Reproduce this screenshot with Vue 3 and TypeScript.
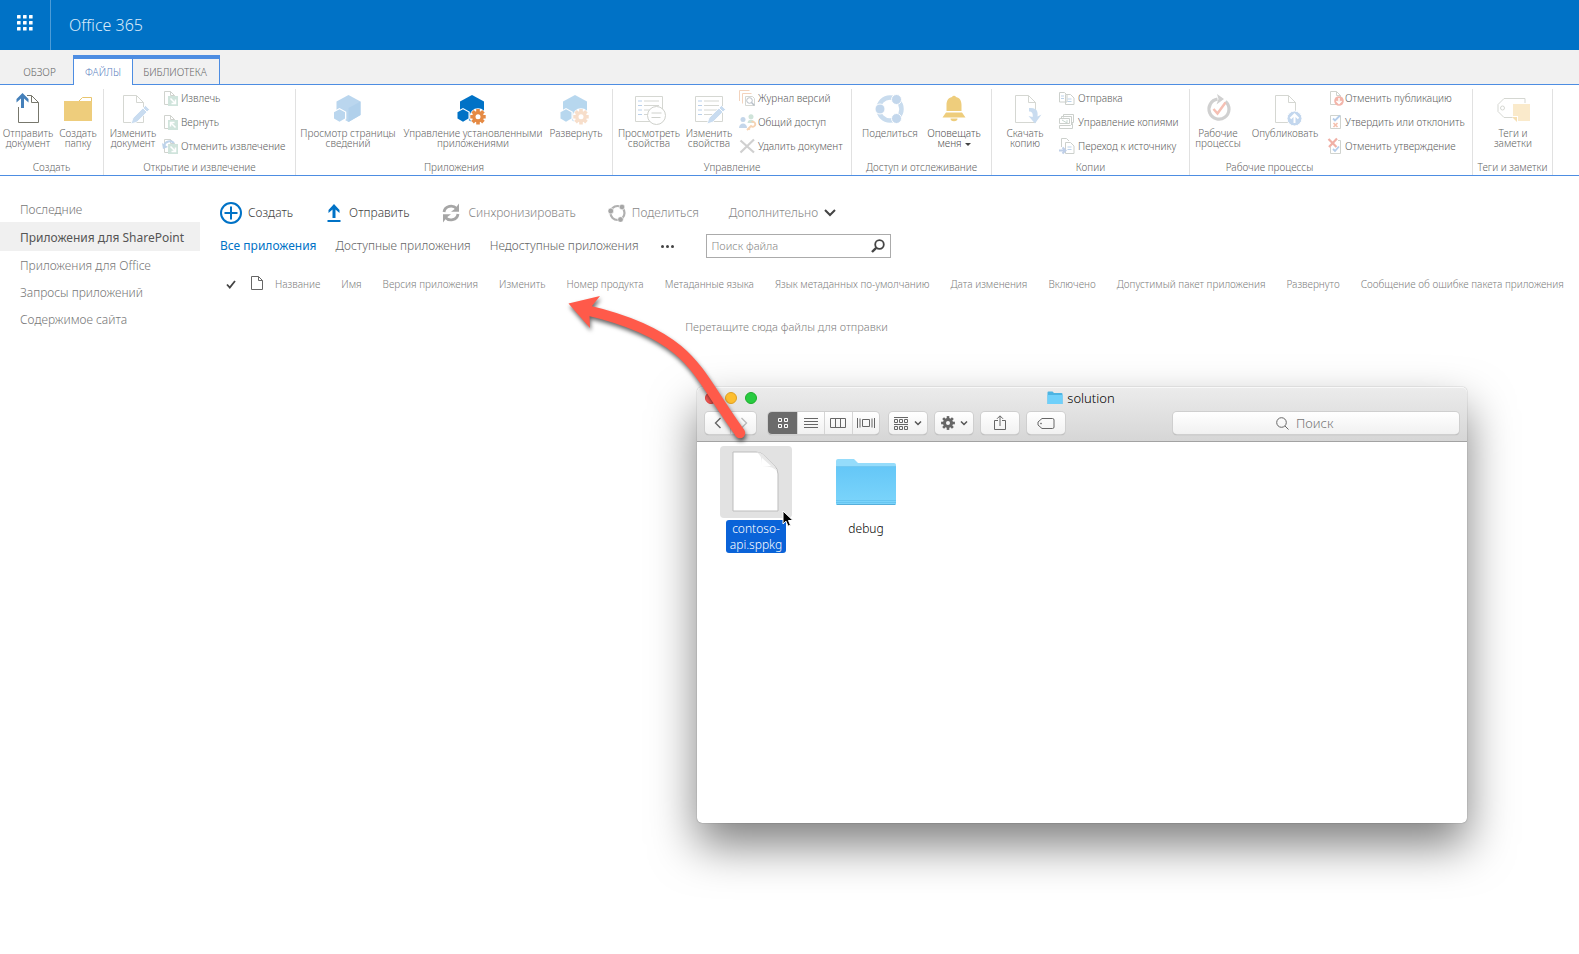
<script setup lang="ts">
import { ref } from 'vue'

interface LargeAction { icon: string; lines: string[]; strong?: boolean; menu?: boolean }
interface SmallAction { icon: string; label: string }
interface RibbonGroup { id: string; label: string; large: LargeAction[]; small?: SmallAction[] }

const doc = (stroke: string) => `<path d="M6.5 2.5h13l7 7v20h-20z M19.5 2.5v7h7" fill="none" stroke="${stroke}"/>`
const pencil = '<path d="M14 31l2-6L28.500 12.500l4 4L20 29z" fill="#c9dcf0" stroke="#fff" stroke-width=".8"/><path d="M26 15l4 4" stroke="#fff"/>'
const gear = '<g fill="#e58a44"><circle cx="21" cy="23.700" r="5.800"/><path d="M19.200 16h3.600v15.400h-3.600zM13.300 21.900h15.400v3.600H13.300z"/><path d="M19.200 16h3.600v15.400h-3.600zM13.300 21.900h15.400v3.600H13.300z" transform="rotate(45 21 23.700)"/></g><circle cx="21" cy="23.700" r="2.500" fill="#fff"/>'
const hexes = (fill: string) => `<path d="M15 2l12 6.500v13.500L15 29 3 22V8.500z" fill="${fill}"/><path d="M6 15l6.800 3.800v7.500L6 30.200l-6.800-3.900v-7.500z" fill="#fff"/><path d="M6 16.200l5.500 3.100v6.300L6 28.700.5 25.600v-6.300z" fill="${fill}"/>`
const propList = '<path d="M2.500 3.500h27v25h-27z" fill="none" stroke="#d5d7d2"/><path d="M5 8h4M5 12.500h4M5 17h4M5 21.500h4" stroke="#b9d0ec"/><path d="M11 8h15M11 12.500h15M11 17h15M11 21.500h13" stroke="#d5d7d2"/>'
const miniDoc = '<path d="M2.500 1.500h6l4 4v9h-10zM8.500 1.500v4h4" fill="none" stroke="#d0d3ce"/>'

const icons: Record<string, string> = {
  upload: '<path d="M15 2.500h4.500l7 7v20h-20V14M19.500 2.500v7h7" fill="none" stroke="#77776c"/><path d="M10.500 0l6 6v3.500l-4.500-4V15H9V5.500L4.500 9.500V6z" fill="#4580ba"/>',
  folder: '<path d="M2.500 8.500h14l4-4h9v4" fill="#fff" stroke="#e8c56e"/><path d="M2 8h28v20H2z" fill="#eecd7c"/>',
  editDoc: doc('#d5d7d2') + pencil,
  viewProps: propList + '<circle cx="23.500" cy="22.500" r="9" fill="#fff" stroke="#cfd1cc"/><path d="M18.500 20h10M18.500 24.500h9" stroke="#cfd1cc"/>',
  editProps: propList + pencil,
  apps: '<path d="M16.500 2l12 6.500v13.500l-12 7-12-7V8.500z" fill="#bad6ee"/><path d="M16.500 15v14l12-7V8.500z" fill="#b0d0eb"/><path d="M7.500 15l6.800 3.800v7.500l-6.800 3.900-6.800-3.900v-7.500z" fill="#fff"/><path d="M7.500 16.200l5.500 3.100v6.300l-5.500 3.100L2 25.600v-6.300z" fill="#bad6ee"/>',
  manageApps: hexes('#0072c6') + '<circle cx="21" cy="23.700" r="8.500" fill="#fff"/>' + gear,
  deploy: '<g opacity=".28">' + hexes('#0072c6') + '<circle cx="21" cy="23.700" r="8.500" fill="#fff"/>' + gear + '</g>',
  share: '<circle cx="16" cy="16" r="11.500" fill="none" stroke="#c9dcee" stroke-width="4.500"/><g fill="#c3d7ec" stroke="#fff" stroke-width="1"><circle cx="6" cy="16" r="5"/><circle cx="22.500" cy="6.500" r="5"/><circle cx="22.500" cy="25.500" r="5"/></g>',
  bell: '<path d="M14 4a2.200 2.200 0 0 1 4 0c4 .8 5.500 4 5.500 8v6H8.500v-6c0-4 1.500-7.200 5.500-8zM8 19.500h16l3.500 5h-23zM12.500 25.500h7a3.500 2.800 0 0 1-7 0z" fill="#eecd7c"/>',
  download: doc('#d5d7d2') + '<path d="M20 15c9-1 9 5 8.500 8.500l4-2-6.500 9-6.500-7.500 4.200 1c.5-4-1-5.500-3.700-5.500z" fill="#c9dcf0"/>',
  workflow: '<path d="M23.500 8.500a10 10 0 1 1-8-2.300" fill="none" stroke="#d0d0d0" stroke-width="3.200"/><path d="M15 1l7 5-7.500 5.500 2-5.500z" fill="#d0d0d0"/><path d="M11.500 16l4 4.500 8-11" fill="none" stroke="#f5c0b4" stroke-width="2.500"/>',
  publish: doc('#d5d7d2') + '<circle cx="25.500" cy="25.500" r="7.500" fill="#c3d7ee" stroke="#fff"/><path d="M25.500 30v-8M21.500 25.500l4-4 4 4" fill="none" stroke="#fff" stroke-width="2"/>',
  tags: '<path d="M7 5.500h21v19H7l-6-6v-7z" fill="none" stroke="#d5d7d2"/><circle cx="5.500" cy="15" r="2" fill="none" stroke="#d5d7d2"/><path d="M15 10h18v18H19l-4-4z" fill="#fff"/><path d="M16 11h17v17H21v-5h-5z" fill="#faeacb"/><path d="M15 24h5v5z" fill="#f6dfb2"/>',
  checkOut: miniDoc + '<path d="M6 6h10v10H6z" fill="#d0e4dc"/><path d="M8.500 8.500l5 5M13.500 9.500v4h-4" fill="none" stroke="#fff" stroke-width="1.500"/>',
  checkIn: miniDoc + '<path d="M6 6h10v10H6z" fill="#d0e4dc"/><path d="M13.500 13.500l-5-5M8.500 12.500v-4h4" fill="none" stroke="#fff" stroke-width="1.500"/>',
  discard: miniDoc + '<path d="M6 6h10v10H6z" fill="#d0e4dc"/><path d="M8.500 8.500l5 5M13.500 9.500v4h-4" fill="none" stroke="#fff" stroke-width="1.500"/><path d="M2 8c1-5 7-6 10-3" fill="none" stroke="#bdd3ea" stroke-width="2"/><path d="M0 5l1 6 5-2z" fill="#bdd3ea"/>',
  history: '<path d="M.5 11V.500h10M3.500 13.500v-10h9" fill="none" stroke="#f3d3bd"/><path d="M6.500 15.500v-9h7l2 2v7z" fill="#fff" stroke="#d5d7d2"/><circle cx="10.500" cy="10.500" r="2.800" fill="none" stroke="#b7bfc8"/><path d="M12.500 12.500l3 3" stroke="#b7bfc8" stroke-width="1.500"/>',
  people: '<g fill="#c4d6ea"><circle cx="4" cy="5.500" r="2.500"/><path d="M0 14c0-6 8-6 8 0z"/></g><g fill="#cfe3d9"><circle cx="12" cy="2.800" r="2.500"/><path d="M8.500 9c0-4.500 7-4.500 7 0z"/></g><path d="M12.500 8a2.500 2.500 0 1 1-.5 4l-4 4M9.500 14l1.500 1.500" fill="none" stroke="#f6d3b3" stroke-width="1.800"/>',
  remove: '<path d="M1.500 2.500L15 14.500M15 1.500L1.500 14.500" stroke="#d0d0d0" stroke-width="2.200"/>',
  send: '<path d="M.5 2.500h5l2.500 2.500v7h-7.500zM6.500 4.500h5l3.500 3.500v6.500h-8.500z" fill="#fff" stroke="#ccd0cc"/><path d="M2 6h3M2 8.500h3M8.500 9h4M8.500 11.500h4" stroke="#bdd3ea"/>',
  copies: '<path d="M4.500 3.500v-3h10v8h-2M2.500 5.500v-3h10v9" fill="none" stroke="#ccd0cc"/><path d="M.5 4.500h10v5h-10zM.5 11.500h11l2-2v5h-13z" fill="#fff" stroke="#ccd0cc"/><path d="M3 6l5 3M8 6v3" stroke="#c6d6cf"/>',
  source: '<path d="M2.500 9V.500h5l2.500 2.500M6.500 4.500h5l3.500 3.500v7.500h-8.500z" fill="#fff" stroke="#ccd0cc"/><path d="M8.500 9h4M8.500 11.500h4" stroke="#bdd3ea"/><path d="M0 12.500h6M3.500 9.500l3 3-3 3" fill="none" stroke="#bfcfe8" stroke-width="2"/>',
  unpublish: miniDoc + '<circle cx="11" cy="11" r="4.800" fill="#f3b5aa"/><path d="M11 8v5.500M8.500 11l2.500 2.500 2.500-2.500" fill="none" stroke="#fff" stroke-width="1.500"/>',
  approve: '<path d="M2.500 1.500h10v13h-10z" fill="none" stroke="#d0d3ce"/><path d="M5 4.500l2 2 5-5" fill="none" stroke="#b5cdea" stroke-width="1.800"/><path d="M5.500 9l4 4M9.500 9l-4 4" stroke="#f4c0ad" stroke-width="1.600"/>',
  unapprove: '<path d="M10 2.500h2.500v13h-10V9" fill="none" stroke="#d0d3ce"/><path d="M.5 1l8 8M9 .500l-8 8.500" stroke="#f0b0a6" stroke-width="2.200"/><path d="M5 11l2 2 4-4.500" fill="none" stroke="#b5cdea" stroke-width="1.800"/>',
}

const groups: RibbonGroup[] = [
  { id: 'create', label: 'Создать', large: [
    { icon: 'upload', lines: ['Отправить', 'документ'] }, { icon: 'folder', lines: ['Создать', 'папку'] }] },
  { id: 'checkout', label: 'Открытие и извлечение', large: [{ icon: 'editDoc', lines: ['Изменить', 'документ'] }],
    small: [{ icon: 'checkOut', label: 'Извлечь' }, { icon: 'checkIn', label: 'Вернуть' }, { icon: 'discard', label: 'Отменить извлечение' }] },
  { id: 'apps', label: 'Приложения', large: [
    { icon: 'apps', lines: ['Просмотр страницы', 'сведений'] },
    { icon: 'manageApps', lines: ['Управление установленными', 'приложениями'] },
    { icon: 'deploy', lines: ['Развернуть'] }] },
  { id: 'manage', label: 'Управление', large: [
    { icon: 'viewProps', lines: ['Просмотреть', 'свойства'] }, { icon: 'editProps', lines: ['Изменить', 'свойства'] }],
    small: [{ icon: 'history', label: 'Журнал версий' }, { icon: 'people', label: 'Общий доступ' }, { icon: 'remove', label: 'Удалить документ' }] },
  { id: 'access', label: 'Доступ и отслеживание', large: [
    { icon: 'share', lines: ['Поделиться'] }, { icon: 'bell', lines: ['Оповещать', 'меня'], strong: true, menu: true }] },
  { id: 'copies', label: 'Копии', large: [{ icon: 'download', lines: ['Скачать', 'копию'] }],
    small: [{ icon: 'send', label: 'Отправка' }, { icon: 'copies', label: 'Управление копиями' }, { icon: 'source', label: 'Переход к источнику' }] },
  { id: 'workflow', label: 'Рабочие процессы', large: [
    { icon: 'workflow', lines: ['Рабочие', 'процессы'] }, { icon: 'publish', lines: ['Опубликовать'] }],
    small: [{ icon: 'unpublish', label: 'Отменить публикацию' }, { icon: 'approve', label: 'Утвердить или отклонить' }, { icon: 'unapprove', label: 'Отменить утверждение' }] },
  { id: 'tags', label: 'Теги и заметки', large: [{ icon: 'tags', lines: ['Теги и', 'заметки'] }] },
]

const nav = ['Последние', 'Приложения для SharePoint', 'Приложения для Office', 'Запросы приложений', 'Содержимое сайта']
const activeNav = ref(1)
const columns = ['Название', 'Имя', 'Версия приложения', 'Изменить', 'Номер продукта', 'Метаданные языка', 'Язык метаданных по-умолчанию', 'Дата изменения', 'Включено', 'Допустимый пакет приложения', 'Развернуто', 'Сообщение об ошибке пакета приложения']
const query = ref('')
const finderQuery = ref('')
const dots = [0, 6, 12]
const gearAngles = [0, 45, 90, 135]
</script>

<template>
  <div class="page">
    <header class="suite-bar">
      <button class="launcher" aria-label="Приложения">
        <svg width="16" height="16" viewBox="0 0 16 16" fill="#fff">
          <template v-for="y in dots" :key="y"><rect v-for="x in dots" :key="x" :x="x" :y="y" width="3.600" height="3.600" rx=".5" /></template>
        </svg>
      </button>
      <a href="#" class="brand">Office 365</a>
    </header>

    <nav class="tabs" aria-label="Лента">
      <button class="tab">ОБЗОР</button>
      <div class="tab-set">
        <button class="tab active">ФАЙЛЫ</button>
        <button class="tab">БИБЛИОТЕКА</button>
      </div>
    </nav>

    <div class="ribbon">
      <section v-for="g in groups" :key="g.id" class="group" :class="g.id">
        <div class="group-body">
          <button v-for="b in g.large" :key="b.icon" class="large" :class="{ strong: b.strong }">
            <svg width="32" height="32" viewBox="0 0 32 32" overflow="visible" v-html="icons[b.icon]" />
            <span v-for="(line, i) in b.lines" :key="line">{{ line }}<i v-if="b.menu && i === b.lines.length - 1" class="caret" /></span>
          </button>
          <div v-if="g.small" class="small-stack">
            <button v-for="s in g.small" :key="s.icon" class="small">
              <svg width="16" height="16" viewBox="0 0 16 16" overflow="visible" v-html="icons[s.icon]" />{{ s.label }}
            </button>
          </div>
        </div>
        <h2 class="group-label">{{ g.label }}</h2>
      </section>
    </div>

    <div class="workspace">
      <nav class="sidebar" aria-label="Сайт">
        <a v-for="(item, i) in nav" :key="item" href="#" :class="{ active: i === activeNav }" @click.prevent="activeNav = i">{{ item }}</a>
      </nav>

      <main class="library">
        <div class="commands">
          <button class="command new">
            <svg width="22" height="22" viewBox="0 0 22 22" fill="none" stroke="#0072c6" stroke-width="2"><circle cx="11" cy="11" r="10" /><path d="M11 4.500v13M4.500 11h13" /></svg>
            Создать
          </button>
          <button class="command send">
            <svg width="14" height="20" viewBox="0 0 14 20"><path d="M7 1l5.500 6v3L8.500 6.500V15h-3V6.500L1.500 10V7zM.5 17h13v2H.5z" fill="#0072c6" /></svg>
            Отправить
          </button>
          <button class="command sync" disabled>
            <svg width="18" height="20" viewBox="0 0 18 20" fill="none" stroke="#a6a6a6" stroke-width="2.800"><path d="M2 9c1-6.500 9-7.500 12.500-3.500M16 11c-1 6.500-9 7.500-12.500 3.500" /><path d="M17 .500v8.300H9l4-3zM1 19.500v-8.300h8l-4 3z" fill="#a6a6a6" stroke="none" /></svg>
            Синхронизировать
          </button>
          <button class="command share" disabled>
            <svg width="18" height="18" viewBox="0 0 18 18"><circle cx="9.500" cy="9" r="7" fill="none" stroke="#b0b0b0" stroke-width="2.200" /><g fill="#a6a6a6" stroke="#fff" stroke-width=".6"><circle cx="2.800" cy="7" r="2.900" /><circle cx="14" cy="3" r="2.800" /><circle cx="12.500" cy="15.500" r="2.800" /></g></svg>
            Поделиться
          </button>
          <button class="command more" disabled>
            Дополнительно
            <svg width="12" height="8" viewBox="0 0 12 8"><path d="M1 1l5 5 5-5" fill="none" stroke="#444" stroke-width="2" /></svg>
          </button>
        </div>

        <div class="views">
          <a href="#" class="current">Все приложения</a>
          <a href="#">Доступные приложения</a>
          <a href="#">Недоступные приложения</a>
          <button class="dots" aria-label="Другие представления"><i /><i /><i /></button>
          <label class="search">
            <input v-model="query" type="text" placeholder="Поиск файла" aria-label="Поиск файла" />
            <svg width="14" height="14" viewBox="0 0 14 14" fill="none" stroke="#444"><circle cx="8.500" cy="5.500" r="4.300" stroke-width="1.800" /><path d="M5.200 8.800L1 13" stroke-width="2.400" /></svg>
          </label>
        </div>

        <table class="items">
          <thead>
            <tr>
              <th class="mark"><svg width="10" height="9" viewBox="0 0 10 9"><path d="M1 4.500l2.800 3L9 1" fill="none" stroke="#444" stroke-width="1.800" /></svg></th>
              <th class="type"><svg width="12" height="14" viewBox="0 0 12 14"><path d="M.5.500h7l4 4v9H.5zM7.500.500v4h4" fill="none" stroke="#666" /></svg></th>
              <th v-for="c in columns" :key="c" scope="col">{{ c }}</th>
            </tr>
          </thead>
        </table>
        <p class="drop-hint">Перетащите сюда файлы для отправки</p>
      </main>
    </div>

    <section class="finder" aria-label="solution">
      <header class="finder-head">
        <div class="title-row">
          <div class="lights"><button class="close" aria-label="Закрыть" /><button class="minimize" aria-label="Свернуть" /><button class="zoom" aria-label="Развернуть" /></div>
          <h1>
            <svg width="16" height="14" viewBox="0 0 16 14"><path d="M.5 1.500q0-1 1-1h4l1.500 1.500h7.500q1 0 1 1v10H.5z" fill="#4db4e2" /><path d="M.5 4h15v9H.5z" fill="#6fd0fa" /></svg>
            solution
          </h1>
        </div>
        <div class="tool-row">
          <div class="buttons history">
            <button aria-label="Назад"><svg width="8" height="12" viewBox="0 0 8 12"><path d="M6.500 1L1.500 6l5 5" fill="none" stroke="#666" stroke-width="1.400" /></svg></button>
            <button aria-label="Вперёд"><svg width="8" height="12" viewBox="0 0 8 12"><path d="M1.500 1l5 5-5 5" fill="none" stroke="#bbb" stroke-width="1.400" /></svg></button>
          </div>
          <div class="buttons modes">
            <button class="on" aria-label="Значки"><svg width="12" height="12" viewBox="0 0 12 12" fill="none" stroke="#fff"><path d="M1.500 1.500h3v3h-3zM7.500 1.500h3v3h-3zM1.500 7.500h3v3h-3zM7.500 7.500h3v3h-3z" /></svg></button>
            <button aria-label="Список"><svg width="14" height="12" viewBox="0 0 14 12" stroke="#666"><path d="M0 1.500h14M0 4.500h14M0 7.500h14M0 10.500h14" /></svg></button>
            <button aria-label="Столбцы"><svg width="16" height="12" viewBox="0 0 16 12" fill="none" stroke="#666"><path d="M.5 1.500h15v9H.5zM5.500 1.500v9M10.500 1.500v9" /></svg></button>
            <button aria-label="Галерея"><svg width="18" height="12" viewBox="0 0 18 12" fill="none" stroke="#666"><path d="M5.500 2.500h7v7h-7zM.5 1v10M3 1.500v9M15 1.500v9M17.500 1v10" /></svg></button>
          </div>
          <button class="button arrange" aria-label="Упорядочить">
            <svg width="15" height="13" viewBox="0 0 15 13" fill="none" stroke="#666"><path d="M.5 2.500h3v3h-3zM5.500 2.500h3v3h-3zM10.500 2.500h3v3h-3zM.5 9.500h3v3h-3zM5.500 9.500h3v3h-3zM10.500 9.500h3v3h-3zM0 .500h14M0 7.500h14" /></svg>
            <svg width="8" height="5" viewBox="0 0 8 5"><path d="M1 .500l3 3 3-3" fill="none" stroke="#555" stroke-width="1.500" /></svg>
          </button>
          <button class="button" aria-label="Действия">
            <svg width="14" height="14" viewBox="-7 -7 14 14"><path v-for="a in gearAngles" :key="a" d="M-1.300-6.900h2.600v13.800h-2.600z" :transform="`rotate(${a})`" fill="#666" /><circle r="5" fill="#666" /><circle r="2" fill="#f6f6f6" /></svg>
            <svg width="8" height="5" viewBox="0 0 8 5"><path d="M1 .500l3 3 3-3" fill="none" stroke="#555" stroke-width="1.500" /></svg>
          </button>
          <button class="button" aria-label="Поделиться">
            <svg width="12" height="16" viewBox="0 0 12 16" fill="none" stroke="#666"><path d="M4 5.500H.500v9h11v-9H8M6 11V1M3 3.800L6 .800l3 3" /></svg>
          </button>
          <button class="button" aria-label="Теги">
            <svg width="18" height="11" viewBox="0 0 18 11" fill="none" stroke="#666"><path d="M5 .500h10.500q1.500 0 1.500 1.500v7q0 1.500-1.500 1.500H5L1 7V4z" /><circle cx="4" cy="5.500" r=".5" /></svg>
          </button>
          <label class="finder-search">
            <svg width="13" height="13" viewBox="0 0 13 13" fill="none" stroke="#666"><circle cx="5.500" cy="5.500" r="4.800" /><path d="M9 9l3.500 3.500" /></svg>
            <input v-model="finderQuery" type="text" placeholder="Поиск" aria-label="Поиск" />
          </label>
        </div>
      </header>
      <div class="files">
        <figure class="file selected">
          <div class="thumb">
            <svg width="48" height="62" viewBox="1 1 48 62">
              <defs><linearGradient id="fold" x1="0" y1="1" x2="1" y2="0"><stop offset="0" stop-color="#fff" /><stop offset="1" stop-color="#d4d4d4" /></linearGradient></defs>
              <path d="M2 2h23q5 0 9 4l9 9q4 4 4 9v37H2z" fill="#fff" stroke="#bdbdbd" />
              <path d="M25 2q6 2 6 14 12 0 15.500 6L43 15l-9-9q-4-4-9-4z" fill="url(#fold)" /><path d="M31 8v8h9z" fill="#fff" />
            </svg>
          </div>
          <figcaption>contoso-<br />api.sppkg</figcaption>
        </figure>
        <figure class="file">
          <div class="thumb">
            <svg width="60" height="48" viewBox="0 0 60 48">
              <defs><linearGradient id="folder" x1="0" y1="0" x2="0" y2="1"><stop offset="0" stop-color="#65c7f7" /><stop offset="1" stop-color="#7cd5fb" /></linearGradient></defs>
              <path d="M0 3q0-2 2-2h16l4 4h36q2 0 2 2v40H0z" fill="#95dcfb" />
              <path d="M0 9h60v36q0 2-2 2H2q-2 0-2-2z" fill="url(#folder)" /><path d="M0 8.500h60M0 42.500h60M0 44.500h60" stroke="#5bbcec" opacity=".6" /><path d="M1 46.500h58" stroke="#56aedb" />
            </svg>
          </div>
          <figcaption>debug</figcaption>
        </figure>
      </div>
      <svg class="cursor" width="13" height="18" viewBox="0 0 13 18"><path d="M1 1v13l3-2.800 2 5 2.500-1-2-4.700H11z" fill="#000" stroke="#fff" /></svg>
    </section>

    <svg class="drag-arrow" width="190" height="160" viewBox="0 0 190 160">
      <path d="M28 20.500C60 28 95 41 118 60c24 20 35 46 62 83" fill="none" stroke="#ff5a4a" stroke-width="10.500" />
      <circle cx="180" cy="143" r="5.200" fill="#ff5a4a" />
      <path d="M8.500 13.500L40 6l-8 10-2.500 10L30 38z" fill="#ff5a4a" />
    </svg>
  </div>
</template>

<style>
body { margin: 0; }
</style>

<style scoped>
.page { position: relative; min-height: 100vh; overflow: hidden; background: #fff; color: #666; font: 300 12px/16px "Noto Sans", "Open Sans", sans-serif; }
button, input { margin: 0; padding: 0; border: 0; background: none; color: inherit; font: inherit; white-space: nowrap; outline: 0; }
a { color: inherit; text-decoration: none; }
svg { display: block; flex: none; }

.suite-bar { display: flex; align-items: center; height: 50px; background: #0072c6; }
.launcher { display: grid; place-items: center; width: 51px; height: 50px; padding-bottom: 4px; border-right: 1px solid #4d9cd7; box-sizing: border-box; }
.brand { margin-left: 18px; color: #d9eafa; font-size: 16px; line-height: 24px; }

.tabs { display: flex; align-items: flex-end; height: 34px; background: #f1f1f1; border-bottom: 1px solid #4d8de2; }
.tab { height: 25px; font-size: 10px; color: #666; }
.tabs > .tab { width: 73px; padding-left: 6px; }
.tab-set { display: flex; height: 25px; border: 1px solid #4d8de2; border-top-width: 4px; border-bottom: 0; }
.tab-set .tab { width: 86px; padding-right: 2px; }
.tab-set .tab.active { width: 59px; height: 26px; padding-right: 0; background: #fff; color: #5b7fc0; border-right: 1px solid #4d8de2; }

.ribbon { display: flex; height: 90px; border-bottom: 1px solid #4d8de2; font-size: 10px; line-height: 10px; }
.group { position: relative; flex: none; box-sizing: border-box; }
.group::after { content: ""; position: absolute; top: 4px; right: 0; bottom: 0; width: 1px; background: #e1e1e1; }
.group-body { display: grid; height: 74px; padding-top: 1px; box-sizing: border-box; }
.large { display: flex; flex-direction: column; align-items: center; padding-top: 7px; }
.large svg { margin-bottom: 3px; }
.large.strong { color: #555; }
.small { display: flex; align-items: center; gap: 3px; height: 24px; color: #606060; }
.group-label { margin: 0; padding-right: 1px; text-align: center; font: inherit; line-height: 16px; }
.create { width: 104px; } .create .group-body { grid-template-columns: 56px 44px; }
.checkout { width: 192px; } .checkout .group-body { grid-template-columns: 58px 1fr; }
.apps { width: 317px; } .apps .group-body { grid-template-columns: 104px 146px 60px; }
.manage { width: 239px; } .manage .group-body { grid-template-columns: 72px 48px 1fr; }
.manage .small-stack { padding-left: 6px; }
.access { width: 140px; } .access .group-body { grid-template-columns: 76px 52px; }
.copies { width: 198px; } .copies .group-body { grid-template-columns: 66px 1fr; }
.copies .small-stack { padding-left: 1px; }
.workflow { width: 283px; } .workflow .group-body { grid-template-columns: 56px 76px 1fr; column-gap: 1px; }
.workflow .small-stack { padding-left: 4px; }
.workflow .small { gap: 1px; }
.workflow .group-label { padding-right: 124px; }
.tags { width: 80px; }
.caret { display: inline-block; margin-left: 3px; vertical-align: middle; border: 3px solid transparent; border-top-color: #444; border-bottom: 0; }

.workspace { display: flex; }
.sidebar { flex: none; width: 200px; padding-top: 20px; color: #777; }
.sidebar a { display: block; height: 27px; padding-left: 20px; line-height: 27px; }
.sidebar a.active { height: 29px; margin: -1px 0 1px; line-height: 31px; background: #f0f0f0; color: #555; font-weight: 400; }
.library { flex: 1; min-width: 0; padding: 21px 0 0 20px; }
.commands { display: flex; align-items: center; height: 32px; color: #444; }
.command { display: flex; align-items: center; gap: 6px; }
.command:disabled { color: #888; }
.send { gap: 8px; margin-left: 34px; }
.sync { gap: 8px; margin-left: 33px; }
.share { margin-left: 32px; } .more { margin-left: 30px; }
.views { display: flex; align-items: center; height: 34px; }
.views a { margin-right: 19px; }
.views a.current { color: #0072c6; font-weight: 400; }
.dots { display: flex; gap: 2px; width: 14px; margin: 0 31px 0 3px; }
.dots i { width: 3px; height: 3px; border-radius: 2px; background: #444; }
.search { display: flex; align-items: center; width: 185px; height: 24px; padding: 0 5px; border: 1px solid #ababab; box-sizing: border-box; }
.search input { flex: 1; min-width: 0; font-size: 11px; }
.search input::placeholder { color: #888; opacity: 1; }
.items { border-collapse: collapse; height: 42px; }
.items th { padding: 0 21px 0 0; font-size: 10px; font-weight: 300; text-align: left; white-space: nowrap; color: #808080; }
.items th.mark { padding: 0 15px 0 6px; }
.items th.type { padding: 0 12px 3px 0; }
.drop-hint { margin: 0; padding-right: 226px; text-align: center; font-size: 11px; line-height: 44px; color: #808080; }

.finder { position: absolute; left: 697px; top: 387px; width: 770px; height: 436px; border-radius: 5px; background: #fff; color: #222; box-shadow: 0 0 1px rgba(0, 0, 0, .6), 0 22px 46px rgba(0, 0, 0, .5); }
.finder-head { height: 54px; border-bottom: 1px solid #a3a3a3; border-radius: 5px 5px 0 0; box-shadow: inset 0 1px #f8f8f8; background: linear-gradient(#ececec, #d6d6d6); }
.title-row { display: grid; grid-template-columns: 1fr auto 1fr; align-items: center; height: 21px; }
.lights { display: flex; gap: 8px; padding-left: 8px; }
.lights button { width: 12px; height: 12px; border: 1px solid #e0443e; border-radius: 6px; background: #fc5b57; box-sizing: border-box; }
.lights .minimize { background: #fdbe2f; border-color: #dfa023; }
.lights .zoom { background: #28cb41; border-color: #1dad2b; }
.finder h1 { display: flex; align-items: center; gap: 4px; margin: 0; padding-right: 2px; font-size: 13px; font-weight: 300; line-height: 18px; color: #000; }
.tool-row { display: flex; align-items: center; gap: 8px; height: 30px; padding: 0 8px; }
.buttons, .button, .finder-search { display: flex; align-items: center; justify-content: center; height: 22px; border-radius: 4px; background: linear-gradient(#fff, #f1f1f1); box-shadow: 0 0 0 1px #cfcfcf, 0 1px 1px #999; }
.button { gap: 5px; width: 38px; }
.buttons button { display: grid; place-items: center; flex: 1; height: 22px; border-left: 1px solid #d5d5d5; }
.buttons button:first-child { border-left: 0; }
.history { width: 51px; margin-right: 4px; }
.modes { width: 111px; margin-right: 2px; }
.modes .on { flex: 0 0 29px; border-radius: 4px 0 0 4px; background: #6b6b6b; }
.finder-search { flex: 1; margin-left: 100px; padding-right: 20px; gap: 7px; }
.finder-search input { width: 40px; font-size: 13px; }
.finder-search input::placeholder { color: #777; opacity: 1; }
.files { display: flex; gap: 38px; padding: 4px 23px; }
.file { display: flex; flex-direction: column; align-items: center; width: 72px; margin: 0; color: #000; }
.thumb { display: grid; place-items: center; width: 72px; height: 72px; border-radius: 4px; }
.file figcaption { margin-top: 2px; padding: 1px 4px 0; text-align: center; border-radius: 3px; line-height: 16px; }
.selected .thumb { background: #e2e2e2; }
.selected figcaption { background: #0a63d8; color: #fff; }
.cursor { position: absolute; left: 85px; top: 123px; }
.drag-arrow { position: absolute; left: 560px; top: 290px; overflow: visible; filter: drop-shadow(1px 3px 2px rgba(0, 0, 0, .6)); pointer-events: none; }
</style>
